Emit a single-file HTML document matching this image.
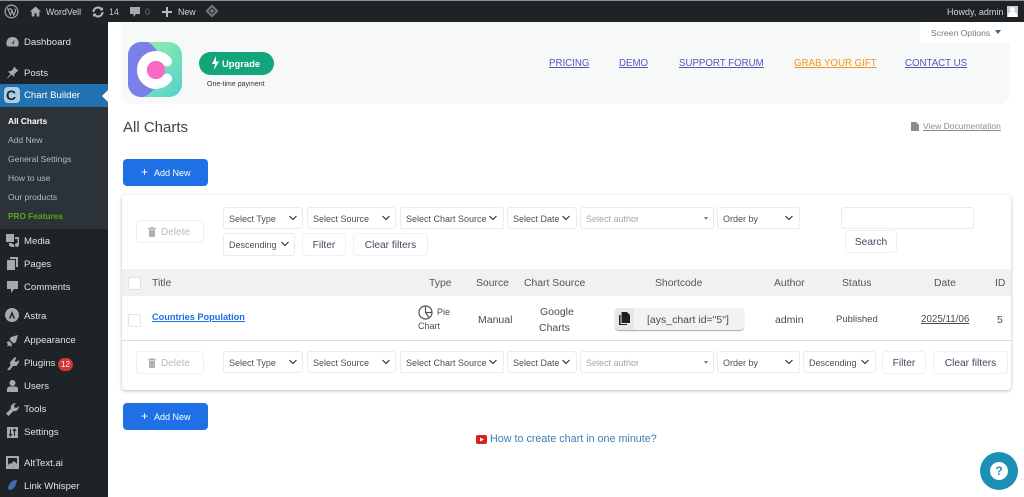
<!DOCTYPE html>
<html>
<head>
<meta charset="utf-8">
<style>
html,body{margin:0;padding:0;width:1024px;height:497px;overflow:hidden;background:#fff;font-family:"Liberation Sans",sans-serif}
.t{position:absolute;white-space:nowrap;line-height:1}
.bar{position:absolute;left:0;top:0;width:1024px;height:22px;background:#1d2327;border-top:1px solid #8c8f94;box-sizing:border-box}
.side{position:absolute;left:0;top:22px;width:108px;height:475px;background:#1d2327}
.sub{position:absolute;left:0;top:107px;width:108px;height:122px;background:#2c3338}
.act{position:absolute;left:0;top:84px;width:108px;height:23px;background:#2271b1}
.m{color:#e0e2e3;font-size:9.6px;left:24px;line-height:12px}
.s{color:#b4b9be;font-size:8.5px;left:8px;line-height:11px}
.i{position:absolute;fill:#a7aaad}
.banner{position:absolute;left:122px;top:22px;width:888px;height:82px;background:#f7f8f8;border-radius:0 0 10px 10px}
.tab{position:absolute;left:920px;top:22px;width:90px;height:21px;background:#fff}
.nav{color:#5358b5;font-size:9.7px;text-decoration:underline;top:58px;line-height:12px}
.blue{position:absolute;left:123px;width:85px;height:27px;background:#1f6fe5;border-radius:4px;color:#fff;font-size:9px}
.card{position:absolute;left:122px;top:195px;width:889px;height:195px;background:#fff;border-radius:4px;box-shadow:0 1px 3px rgba(0,0,0,.28)}
.head{position:absolute;left:122px;top:269px;width:889px;height:27px;background:#f1f1f1}
.ln{position:absolute;left:122px;top:340px;width:889px;height:1px;background:#dcdde0}
.f{position:absolute;box-sizing:border-box;height:22px;border:1px solid #e9ebee;border-radius:3px;background:#fff;color:#495057;font-size:9px;line-height:22px;padding-left:5px;white-space:nowrap}
.f svg{position:absolute;right:5px;top:6px}
.b{position:absolute;box-sizing:border-box;height:23px;border:1px solid #eff0f3;border-radius:4px;background:#fff;color:#3d4a5c;font-size:10.2px;line-height:23px;text-align:center}
.th{color:#51565c;font-size:10.4px;top:279px}
.td{color:#474c52;font-size:10.5px}
</style>
</head>
<body>
<div class="side"></div>
<div class="sub"></div>
<div class="act"></div>
<div class="bar"></div>

<!-- admin bar -->
<svg style="position:absolute;left:4px;top:4px" width="15" height="15" viewBox="0 0 20 20"><circle cx="10" cy="10" r="8.5" fill="none" stroke="#a7aaad" stroke-width="1.6"/><path d="M4 6.5h6M5.5 7l3 8 2-6-1-2M10 7l3 8 2.5-6c.3-1.500-.5-2.500-1.500-2.500" fill="none" stroke="#a7aaad" stroke-width="1.500"/></svg>
<svg class="i" style="left:30px;top:6px" width="11" height="11" viewBox="0 0 12 12"><path d="M6 .5 0 6h1.800v5.500h3V8h2.400v3.500h3V6H12z"/></svg>
<div class="t" style="left:46px;top:8px;color:#d5d7d9;font-size:8.8px">WordVell</div>
<svg style="position:absolute;left:92px;top:6px" width="12" height="12" viewBox="0 0 12 12"><path d="M1.500 6a4.500 4.500 0 0 1 8-2.800M10.500 6a4.500 4.500 0 0 1-8 2.800" fill="none" stroke="#b4b7ba" stroke-width="2"/><path d="M11 1v3.500H7.500zM1 11V7.500h3.500z" fill="#b4b7ba"/></svg>
<div class="t" style="left:109px;top:8px;color:#c3c5c7;font-size:8.8px">14</div>
<svg class="i" style="left:130px;top:7px" width="10" height="11" viewBox="0 0 10 11"><path d="M0 0h10v7H6l-2.500 3V7H0z"/></svg>
<div class="t" style="left:145px;top:8px;color:#72777c;font-size:8.8px">0</div>
<svg style="position:absolute;left:162px;top:7px" width="10" height="10" viewBox="0 0 10 10"><path d="M4 0h2v4h4v2H6v4H4V6H0V4h4z" fill="#b9bbbd"/></svg>
<div class="t" style="left:178px;top:8px;color:#d5d7d9;font-size:8.8px">New</div>
<svg style="position:absolute;left:205px;top:4px" width="14" height="14" viewBox="0 0 14 14"><path d="M7 .5 13.500 7 7 13.500.5 7z" fill="#777b7f"/><path d="M7 4 10 7 7 10 4 7z" fill="none" stroke="#25292d"/></svg>
<div class="t" style="left:947px;top:8px;color:#d5d7d9;font-size:9px">Howdy, admin</div>
<div style="position:absolute;left:1007px;top:6px;width:11px;height:11px;background:#c9cbcc"><div style="position:absolute;left:3px;top:1px;width:5px;height:5px;background:#fff;border-radius:50%"></div><div style="position:absolute;left:1px;top:6px;width:9px;height:5px;background:#fff;border-radius:3px 3px 0 0"></div></div>

<!-- sidebar -->
<svg class="i" style="left:6px;top:36px" width="13" height="12" viewBox="0 0 13 12"><path d="M6.500 1a6 6 0 0 0-5 9.500h10A6 6 0 0 0 6.500 1zM6 7.500 8.500 3.500 7.500 8z"/></svg>
<div class="t m" style="top:37px">Dashboard</div>
<svg class="i" style="left:6px;top:66px" width="13" height="13" viewBox="0 0 13 13"><path d="M8 .5 12.500 5 11 5.500 8.500 8 8 11 5.500 8.500 2 12 1 12l3.500-4L2 5.500l3-.5L7.500 2.500z"/></svg>
<div class="t m" style="top:68px">Posts</div>
<div style="position:absolute;left:4px;top:87px;width:16px;height:16px;background:#a9cfe8;border-radius:4px"></div>
<div class="t" style="left:6px;top:88px;color:#1d2327;font-size:14px;font-weight:bold">C</div>
<div class="t m" style="top:90px;color:#fff">Chart Builder</div>
<div style="position:absolute;left:102px;top:90px;border:6px solid transparent;border-right-color:#fff;border-left:0"></div>
<div class="t s" style="top:116px;color:#fff;font-weight:bold;font-size:8.3px">All Charts</div>
<div class="t s" style="top:135px">Add New</div>
<div class="t s" style="top:154px">General Settings</div>
<div class="t s" style="top:173px">How to use</div>
<div class="t s" style="top:192px">Our products</div>
<div class="t s" style="top:211px;color:#5fa314;font-weight:bold;font-size:8.3px">PRO Features</div>
<svg class="i" style="left:6px;top:234px" width="13" height="13" viewBox="0 0 13 13"><path d="M0 0h8v8H0zM9 3h4v8a2 2 0 1 1-1.500-2V5H9zM3 9h3v1a2 2 0 1 1-1.500 2H3z"/></svg>
<div class="t m" style="top:236px">Media</div>
<svg class="i" style="left:7px;top:257px" width="11" height="13" viewBox="0 0 11 13"><path d="M3 0h8v10H9V2H3zM0 3h8v10H0z"/></svg>
<div class="t m" style="top:259px">Pages</div>
<svg class="i" style="left:7px;top:281px" width="11" height="12" viewBox="0 0 11 12"><path d="M0 0h11v8H7l-3 4V8H0z"/></svg>
<div class="t m" style="top:282px">Comments</div>
<svg style="position:absolute;left:5px;top:308px" width="14" height="14" viewBox="0 0 14 14"><circle cx="7" cy="7" r="7" fill="#a7aaad"/><path d="M7 3 4 10.500h1.500L7 7l1.500 3.500H10z" fill="#1d2327"/></svg>
<div class="t m" style="top:311px">Astra</div>
<svg class="i" style="left:6px;top:334px" width="13" height="13" viewBox="0 0 13 13"><path d="M5 3 12 1 10 8 7.500 9.500 3.500 5.500zM3 7l3 3-1 3-1.500-1.500L1 12.500 2 10 .5 8.500z"/></svg>
<div class="t m" style="top:335px">Appearance</div>
<svg class="i" style="left:7px;top:357px" width="12" height="13" viewBox="0 0 12 13"><path d="M8 0 9.500 1 7.500 4 9.500 5 11.500 3 12 5 9.500 9H6L3 13H0L3.500 8.500 3 5z"/></svg>
<div class="t m" style="top:358px">Plugins</div>
<div style="position:absolute;left:58px;top:358px;width:15px;height:13px;border-radius:7px;background:#d63638;color:#fff;font-size:8px;line-height:13px;text-align:center">12</div>
<svg class="i" style="left:7px;top:380px" width="11" height="12" viewBox="0 0 11 12"><circle cx="5.500" cy="3" r="3"/><path d="M0 12V9a3 3 0 0 1 3-2.500h5A3 3 0 0 1 11 9v3z"/></svg>
<div class="t m" style="top:381px">Users</div>
<svg class="i" style="left:6px;top:403px" width="13" height="13" viewBox="0 0 13 13"><path d="M12.500 3 10.500 5 8.500 4.500 8 2.500 10 .5A4 4 0 0 0 5 5.500L0 10.500 2.500 13 7.500 8A4 4 0 0 0 12.500 3z"/></svg>
<div class="t m" style="top:404px">Tools</div>
<svg class="i" style="left:7px;top:427px" width="11" height="11" viewBox="0 0 11 11"><path d="M0 0h11v11H0z"/><path d="M3.500 2v7M2 7l1.500 2L5 7M7.500 9V2M6 4l1.500-2L9 4" stroke="#1d2327" fill="none"/></svg>
<div class="t m" style="top:427px">Settings</div>
<svg style="position:absolute;left:6px;top:456px" width="13" height="13" viewBox="0 0 13 13"><path d="M0 0h13v13H0z" fill="#a7aaad"/><path d="M2 2h9v6L8 5 5 8 4 7 2 9z" fill="#1d2327"/></svg>
<div class="t m" style="top:458px">AltText.ai</div>
<svg style="position:absolute;left:8px;top:480px" width="9" height="10" viewBox="0 0 9 10"><path d="M9 0C4 0 1 3 0 8l1 2c5 0 7-4 8-10z" fill="#3b6fb0"/></svg>
<div class="t m" style="top:481px">Link Whisper</div>

<!-- banner -->
<div class="banner"></div>
<div class="tab"></div>
<div class="t" style="left:931px;top:29px;color:#72777c;font-size:8.600px">Screen Options</div>
<div style="position:absolute;left:995px;top:30px;border:3.500px solid transparent;border-top:4px solid #555d66;border-bottom:0"></div>
<svg style="position:absolute;left:128px;top:42px" width="54" height="55" viewBox="0 0 54 55">
<defs>
<linearGradient id="g" x1="0" y1="0" x2="1" y2="1"><stop offset="0" stop-color="#9ef59c"/><stop offset="1" stop-color="#55cfd0"/></linearGradient>
<clipPath id="c"><rect width="54" height="55" rx="13"/></clipPath>
</defs>
<g clip-path="url(#c)"><rect width="54" height="55" fill="url(#g)"/><path d="M0 0H20C29 6 33 13 33 27C33 42 25 50 16 55H0z" fill="#7a80ea"/></g>
<path d="M39 19.400A14 14 0 1 0 39 36.600" fill="none" stroke="#fff" stroke-width="10" stroke-linecap="round"/>
<circle cx="28" cy="28" r="9" fill="#fb68c6"/>
</svg>
<div style="position:absolute;left:199px;top:52px;width:75px;height:23px;background:#14a57c;border-radius:12px"></div>
<svg style="position:absolute;left:211px;top:56px" width="8" height="14" viewBox="0 0 8 14"><path d="M5 0 1 8h3L3 14 8 5.500H5z" fill="#fff"/></svg>
<div class="t" style="left:222px;top:59px;color:#fff;font-size:9.400px;font-weight:bold">Upgrade</div>
<div class="t" style="left:207px;top:81px;color:#333;font-size:7px">One-time payment</div>
<div class="t nav" style="left:549px">PRICING</div>
<div class="t nav" style="left:619px">DEMO</div>
<div class="t nav" style="left:679px">SUPPORT FORUM</div>
<div class="t nav" style="left:794px;color:#f0951d">GRAB YOUR GIFT</div>
<div class="t nav" style="left:905px">CONTACT US</div>

<div class="t" style="left:123px;top:120px;color:#3c434a;font-size:15px">All Charts</div>
<svg style="position:absolute;left:911px;top:122px" width="8" height="9" viewBox="0 0 8 9"><path d="M0 0h5l3 3v6H0z" fill="#8a8e93"/></svg>
<div class="t" style="left:923px;top:122px;color:#888c91;font-size:8.500px;text-decoration:underline">View Documentation</div>

<div class="blue" style="top:159px"><span class="t" style="left:18px;top:7px;font-size:12px">+</span><span class="t" style="left:31px;top:10px">Add New</span></div>

<!-- card -->
<div class="card"></div>
<div class="head"></div>
<div class="ln"></div>

<div class="b" style="left:136px;top:220px;width:68px;color:#b5b9be;font-size:10px"><svg style="position:absolute;left:11px;top:6px" width="8" height="10" viewBox="0 0 8 10"><path d="M0 1h2.500V0h3v1H8v1.500H0zM1 3h6v7H1z" fill="#aeb2b6"/></svg><span style="position:absolute;left:24px;top:0">Delete</span></div>
<div class="f" style="left:223px;top:207px;width:80px">Select Type<svg style="right:4px" width="10" height="8" viewBox="0 0 10 8"><path d="M1.500 2 5 5.500 8.500 2" fill="none" stroke="#343a40" stroke-width="1.200"/></svg></div>
<div class="f" style="left:307px;top:207px;width:89px">Select Source<svg style="right:4px" width="10" height="8" viewBox="0 0 10 8"><path d="M1.500 2 5 5.500 8.500 2" fill="none" stroke="#343a40" stroke-width="1.200"/></svg></div>
<div class="f" style="left:400px;top:207px;width:104px">Select Chart Source<svg width="10" height="8" viewBox="0 0 10 8"><path d="M1.500 2 5 5.500 8.500 2" fill="none" stroke="#343a40" stroke-width="1.200"/></svg></div>
<div class="f" style="left:507px;top:207px;width:70px">Select Date<svg width="10" height="8" viewBox="0 0 10 8"><path d="M1.500 2 5 5.500 8.500 2" fill="none" stroke="#343a40" stroke-width="1.200"/></svg></div>
<div class="f" style="left:580px;top:207px;width:134px;color:#a3a6aa">Select author<span style="position:absolute;right:5px;top:9px;border:2.500px solid transparent;border-top:3px solid #777;border-bottom:0"></span></div>
<div class="f" style="left:717px;top:207px;width:83px">Order by<svg width="10" height="8" viewBox="0 0 10 8"><path d="M1.500 2 5 5.500 8.500 2" fill="none" stroke="#343a40" stroke-width="1.200"/></svg></div>
<div class="f" style="left:841px;top:207px;width:133px"></div>
<div class="b" style="left:845px;top:230px;width:52px">Search</div>
<div class="f" style="left:223px;top:233px;width:72px;height:23px;line-height:23px">Descending<svg style="right:4px" width="10" height="8" viewBox="0 0 10 8"><path d="M1.500 2 5 5.500 8.500 2" fill="none" stroke="#343a40" stroke-width="1.200"/></svg></div>
<div class="b" style="left:302px;top:233px;width:44px">Filter</div>
<div class="b" style="left:353px;top:233px;width:75px">Clear filters</div>

<!-- table head -->
<div style="position:absolute;left:128px;top:277px;width:11px;height:11px;background:#fff;border:1px solid #e0e1e3;border-radius:2px"></div>
<div class="t th" style="left:152px">Title</div>
<div class="t th" style="left:429px">Type</div>
<div class="t th" style="left:476px">Source</div>
<div class="t th" style="left:524px">Chart Source</div>
<div class="t th" style="left:655px">Shortcode</div>
<div class="t th" style="left:774px">Author</div>
<div class="t th" style="left:842px">Status</div>
<div class="t th" style="left:934px">Date</div>
<div class="t th" style="left:995px">ID</div>

<!-- row -->
<div style="position:absolute;left:128px;top:314px;width:11px;height:11px;background:#fff;border:1px solid #e4e5e7;border-radius:2px"></div>
<div class="t" style="left:152px;top:313px;color:#1f6fe5;font-size:9.200px;font-weight:bold;text-decoration:underline">Countries Population</div>
<svg style="position:absolute;left:418px;top:305px" width="15" height="15" viewBox="0 0 15 15"><circle cx="7.500" cy="7.500" r="6.500" fill="none" stroke="#50555a" stroke-width="1.200"/><path d="M7.500 1v6.500l3.500 5M7.500 7.500H14" fill="none" stroke="#50555a" stroke-width="1.200"/></svg>
<div class="t td" style="left:437px;top:308px;font-size:9px">Pie</div>
<div class="t td" style="left:418px;top:322px;font-size:9px">Chart</div>
<div class="t td" style="left:478px;top:314px;line-height:12px">Manual</div>
<div class="t td" style="left:540px;top:306px;line-height:12px">Google</div>
<div class="t td" style="left:539px;top:322px;line-height:12px">Charts</div>
<div style="position:absolute;left:615px;top:308px;width:129px;height:22px;background:#f1f2f4;border-radius:4px;box-shadow:0 1px 1px rgba(0,0,0,.35)"></div>
<div style="position:absolute;left:615px;top:308px;width:19px;height:22px;background:#e6e7ea;border-radius:4px 0 0 4px"></div>
<svg style="position:absolute;left:618px;top:312px" width="13" height="13" viewBox="0 0 13 13"><path d="M3.500 0H9l3 3v8H3.500zM1 3h1.500v9H9v1H1z" fill="#1d1f21"/></svg>
<div class="t td" style="left:647px;top:314px;font-size:10.500px;line-height:12px">[ays_chart id="5"]</div>
<div class="t td" style="left:775px;top:314px;line-height:12px">admin</div>
<div class="t td" style="left:836px;top:314px;font-size:9.500px;line-height:11px">Published</div>
<div class="t td" style="left:921px;top:314px;font-size:9.800px;line-height:12px;text-decoration:underline">2025/11/06</div>
<div class="t td" style="left:997px;top:314px;line-height:12px">5</div>

<!-- bottom filters -->
<div class="b" style="left:136px;top:351px;width:68px;color:#b5b9be;font-size:10px"><svg style="position:absolute;left:11px;top:6px" width="8" height="10" viewBox="0 0 8 10"><path d="M0 1h2.500V0h3v1H8v1.500H0zM1 3h6v7H1z" fill="#aeb2b6"/></svg><span style="position:absolute;left:24px;top:0">Delete</span></div>
<div class="f" style="left:223px;top:351px;width:80px">Select Type<svg style="right:4px" width="10" height="8" viewBox="0 0 10 8"><path d="M1.500 2 5 5.500 8.500 2" fill="none" stroke="#343a40" stroke-width="1.200"/></svg></div>
<div class="f" style="left:307px;top:351px;width:89px">Select Source<svg style="right:4px" width="10" height="8" viewBox="0 0 10 8"><path d="M1.500 2 5 5.500 8.500 2" fill="none" stroke="#343a40" stroke-width="1.200"/></svg></div>
<div class="f" style="left:400px;top:351px;width:104px">Select Chart Source<svg width="10" height="8" viewBox="0 0 10 8"><path d="M1.500 2 5 5.500 8.500 2" fill="none" stroke="#343a40" stroke-width="1.200"/></svg></div>
<div class="f" style="left:507px;top:351px;width:70px">Select Date<svg width="10" height="8" viewBox="0 0 10 8"><path d="M1.500 2 5 5.500 8.500 2" fill="none" stroke="#343a40" stroke-width="1.200"/></svg></div>
<div class="f" style="left:580px;top:351px;width:134px;color:#a3a6aa">Select author<span style="position:absolute;right:5px;top:9px;border:2.500px solid transparent;border-top:3px solid #777;border-bottom:0"></span></div>
<div class="f" style="left:717px;top:351px;width:83px">Order by<svg width="10" height="8" viewBox="0 0 10 8"><path d="M1.500 2 5 5.500 8.500 2" fill="none" stroke="#343a40" stroke-width="1.200"/></svg></div>
<div class="f" style="left:803px;top:351px;width:73px">Descending<svg style="right:5px" width="10" height="8" viewBox="0 0 10 8"><path d="M1.500 2 5 5.500 8.500 2" fill="none" stroke="#343a40" stroke-width="1.200"/></svg></div>
<div class="b" style="left:882px;top:351px;width:44px">Filter</div>
<div class="b" style="left:933px;top:351px;width:75px">Clear filters</div>

<div class="blue" style="top:403px"><span class="t" style="left:18px;top:7px;font-size:12px">+</span><span class="t" style="left:31px;top:10px">Add New</span></div>

<svg style="position:absolute;left:476px;top:435px" width="11" height="9" viewBox="0 0 11 9"><rect width="11" height="9" rx="2" fill="#d9201c"/><path d="M4 2.500 8 4.500 4 6.500z" fill="#fff"/></svg>
<div class="t" style="left:490px;top:434px;color:#3f7fb5;font-size:10.750px">How to create chart in one minute?</div>

<div style="position:absolute;left:980px;top:452px;width:38px;height:38px;border-radius:50%;background:#1d8fb5"></div>
<div style="position:absolute;left:990px;top:462px;width:18px;height:18px;border-radius:50%;background:#fff;color:#1d8fb5;font-size:12px;font-weight:bold;line-height:18px;text-align:center">?</div>
</body>
</html>
